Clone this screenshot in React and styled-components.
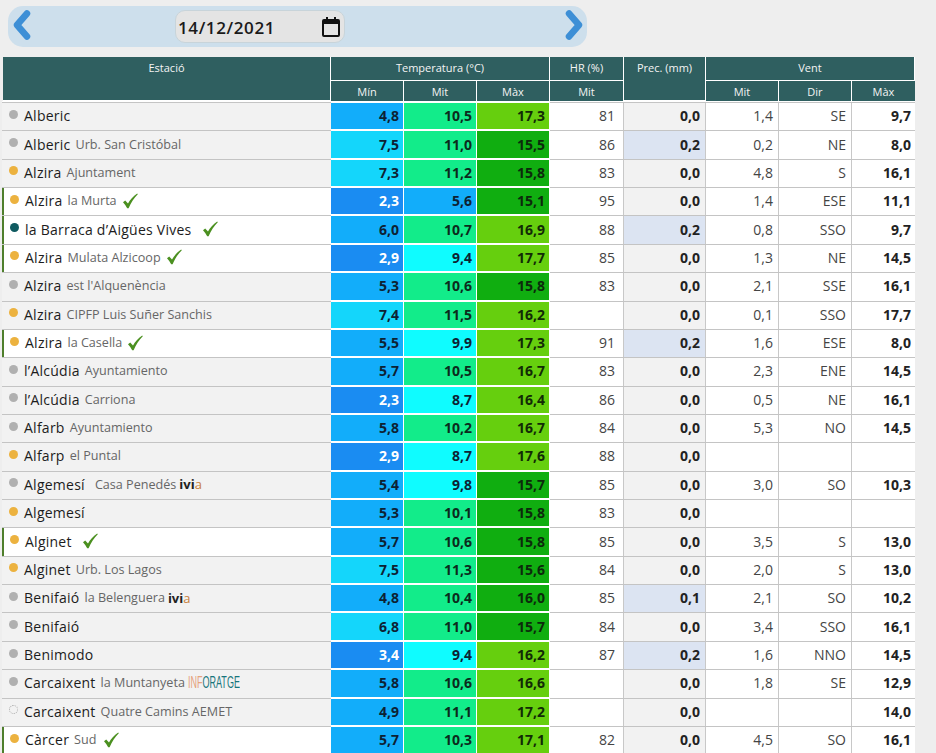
import React from 'react';
import styled, { createGlobalStyle } from 'styled-components';

const COLUMNS = '329px 73px 73px 73px 74px 82px 73px 73px 63px';
const HEADER_COLUMNS = '328px 73px 73px 73px 74px 82px 73px 73px 63px';

const GlobalStyle = createGlobalStyle`
  html, body {
    margin: 0;
    height: 100%;
    overflow: hidden;
    background: #eeeeee;
  }
  body {
    font-family: "Open Sans", "Liberation Sans", sans-serif;
    color: #222;
  }
`;

const Page = styled.div`
  padding: 6px 21px 0 2px;
`;

const DateBar = styled.div`
  display: flex;
  align-items: center;
  width: 579px;
  height: 41px;
  margin: 0 0 10px 6px;
  padding: 0 4px 0 5px;
  box-sizing: border-box;
  background: #cddfec;
  border-radius: 15px;
`;

const Arrow = styled.svg`
  display: block;
  width: 18px;
  height: 30px;
  margin-top: -3px;
  fill: none;
  stroke: #3d8fd6;
  stroke-width: 6.5;
  stroke-linecap: round;
  stroke-linejoin: round;
`;

const DateBox = styled.div`
  display: flex;
  align-items: center;
  justify-content: space-between;
  width: 170px;
  height: 33px;
  margin: 0 auto 0 144px;
  padding: 1px 4px 0 2px;
  box-sizing: border-box;
  background: #e4e4e4;
  border: 1px solid #c8d4da;
  border-radius: 10px;
  font-size: 17px;
  font-weight: 600;
  letter-spacing: .6px;
  color: #1a1a1a;
`;

const CalendarIcon = styled.svg`
  display: block;
  width: 18px;
  height: 20px;
  margin-top: -1px;
`;

const HeaderGrid = styled.div`
  display: grid;
  grid-template-columns: ${HEADER_COLUMNS};
  grid-template-rows: 24px 20px;
  margin-left: 1px;
  color: #f4f4f4;
  font-size: 11px;
  font-weight: 500;
`;

const HeaderCell = styled.div`
  display: flex;
  justify-content: center;
  align-items: ${p => (p.$top ? 'flex-start' : 'center')};
  padding-top: ${p => (p.$top ? '3px' : '0')};
  box-sizing: border-box;
  background: #2f5f60;
  border-right: 1px solid #fff;
  border-bottom: ${p => (p.$sub ? '0' : '1px solid #fff')};
  grid-column: ${p => p.$col || 'auto'};
  grid-row: ${p => p.$row || 'auto'};
  &:last-child {
    border-right: 0;
  }
`;

const HeaderGap = styled.div`
  height: 1px;
  background: #fff;
`;

const Row = styled.div`
  display: grid;
  grid-template-columns: ${COLUMNS};
  height: 28.36px;
  box-sizing: border-box;
  border-top: 1px solid #c4c4c4;
  background: #fff;
  font-size: 13.5px;
`;

const StationCell = styled.div`
  display: flex;
  align-items: center;
  min-width: 0;
  padding: 0 0 2px ${p => (p.$active ? '6px' : '7px')};
  box-sizing: border-box;
  white-space: nowrap;
  background: ${p => (p.$active ? '#fff' : '#f2f2f2')};
  border-left: ${p => (p.$active ? '2px solid #4f7f2c' : '0')};
`;

const Dot = styled.span`
  flex: none;
  width: 9px;
  height: 9px;
  margin: -3px 6px 0 0;
  box-sizing: border-box;
  border-radius: 50%;
  background: ${p => (p.$kind === 'none' ? 'transparent' : p.$color)};
  border: ${p => (p.$kind === 'none' ? '1px dotted #aaa' : '0')};
`;

const Name = styled.span`
  font-size: 14px;
  letter-spacing: .25px;
  color: #1c1c1c;
`;

const Place = styled.span`
  margin-left: ${p => p.$gap || 5}px;
  font-size: 12.6px;
  color: #666;
`;

const Ivia = styled.span`
  margin-left: 3px;
  font-size: 13px;
  font-weight: 700;
  color: #222;
  b {
    font-weight: 500;
    color: #c8803c;
  }
`;

const Inforatge = styled.span`
  display: inline-block;
  margin-left: 3px;
  width: 54px;
  font-family: "Liberation Sans", sans-serif;
  font-size: 17px;
  color: #17757c;
  transform-origin: left center;
  transform: scaleX(.53);
  i {
    font-style: normal;
    color: #e6a27e;
  }
`;

const Check = styled.svg`
  flex: none;
  width: 16px;
  height: 16px;
  margin-left: ${p => p.$gap || 5}px;
  fill: #4b9020;
`;

const TempCell = styled.div`
  display: flex;
  align-items: center;
  justify-content: flex-end;
  padding: 0 4px 1px 0;
  box-sizing: border-box;
  font-size: 14px;
  font-weight: 700;
  background: ${p => p.$bg};
  color: ${p => p.$fg};
  border-right: 1px solid #fff;
  border-bottom: 1px solid #fff;
  margin-top: -1px;
  border-top: 1px solid #fff;
`;

const ValueCell = styled.div`
  display: flex;
  align-items: center;
  justify-content: flex-end;
  padding: 0 ${p => p.$pad || 6}px 2px 0;
  box-sizing: border-box;
  font-size: 14px;
  color: #444;
  border-right: 1px solid #c8c8c8;
  &:last-child {
    border-right: 0;
  }
`;

const RainCell = styled(ValueCell)`
  font-weight: 700;
  color: #222;
  background: ${p => (p.$wet ? '#dce4f2' : '#f2f2f2')};
`;

const GustCell = styled(ValueCell)`
  font-weight: 700;
  color: #222;
`;

const DOTS = { grey: '#b0b0b0', orange: '#ecb23f', teal: '#0f5a60', none: 'none' };

// name, place, dot, check gap, min, mit, max, hr, prec, wind, dir, gust, brand, place gap
const STATIONS = [
  ['Alberic', '', 'grey', 0, '4,8', '10,5', '17,3', '81', '0,0', '1,4', 'SE', '9,7'],
  ['Alberic', 'Urb. San Cristóbal', 'grey', 0, '7,5', '11,0', '15,5', '86', '0,2', '0,2', 'NE', '8,0'],
  ['Alzira', 'Ajuntament', 'orange', 0, '7,3', '11,2', '15,8', '83', '0,0', '4,8', 'S', '16,1'],
  ['Alzira', 'la Murta', 'orange', 5, '2,3', '5,6', '15,1', '95', '0,0', '1,4', 'ESE', '11,1'],
  ['la Barraca d’Aigües Vives', '', 'teal', 11, '6,0', '10,7', '16,9', '88', '0,2', '0,8', 'SSO', '9,7'],
  ['Alzira', 'Mulata Alzicoop', 'orange', 5, '2,9', '9,4', '17,7', '85', '0,0', '1,3', 'NE', '14,5'],
  ['Alzira', 'est l\'Alquenència', 'grey', 0, '5,3', '10,6', '15,8', '83', '0,0', '2,1', 'SSE', '16,1'],
  ['Alzira', 'CIPFP Luis Suñer Sanchis', 'orange', 0, '7,4', '11,5', '16,2', '', '0,0', '0,1', 'SSO', '17,7'],
  ['Alzira', 'la Casella', 'orange', 5, '5,5', '9,9', '17,3', '91', '0,2', '1,6', 'ESE', '8,0'],
  ['l’Alcúdia', 'Ayuntamiento', 'grey', 0, '5,7', '10,5', '16,7', '83', '0,0', '2,3', 'ENE', '14,5'],
  ['l’Alcúdia', 'Carriona', 'grey', 0, '2,3', '8,7', '16,4', '86', '0,0', '0,5', 'NE', '16,1'],
  ['Alfarb', 'Ayuntamiento', 'grey', 0, '5,8', '10,2', '16,7', '84', '0,0', '5,3', 'NO', '14,5'],
  ['Alfarp', 'el Puntal', 'orange', 0, '2,9', '8,7', '17,6', '88', '0,0', '', '', ''],
  ['Algemesí', 'Casa Penedés', 'grey', 0, '5,4', '9,8', '15,7', '85', '0,0', '3,0', 'SO', '10,3', 'ivia', 10],
  ['Algemesí', '', 'orange', 0, '5,3', '10,1', '15,8', '83', '0,0', '', '', ''],
  ['Alginet', '', 'orange', 10, '5,7', '10,6', '15,8', '85', '0,0', '3,5', 'S', '13,0'],
  ['Alginet', 'Urb. Los Lagos', 'orange', 0, '7,5', '11,3', '15,6', '84', '0,0', '2,0', 'S', '13,0'],
  ['Benifaió', 'la Belenguera', 'grey', 0, '4,8', '10,4', '16,0', '85', '0,1', '2,1', 'SO', '10,2', 'ivia'],
  ['Benifaió', '', 'grey', 0, '6,8', '11,0', '15,7', '84', '0,0', '3,4', 'SSO', '16,1'],
  ['Benimodo', '', 'grey', 0, '3,4', '9,4', '16,2', '87', '0,2', '1,6', 'NNO', '14,5'],
  ['Carcaixent', 'la Muntanyeta', 'grey', 0, '5,8', '10,6', '16,6', '', '0,0', '1,8', 'SE', '12,9', 'inforatge'],
  ['Carcaixent', 'Quatre Camins AEMET', 'none', 0, '4,9', '11,1', '17,2', '', '0,0', '', '', '14,0'],
  ['Càrcer', 'Sud', 'orange', 7, '5,7', '10,3', '17,1', '82', '0,0', '4,5', 'SO', '16,1'],
];

function tempColors(text) {
  const t = parseFloat(text.replace(',', '.'));
  if (t < 4) return { bg: '#1a8cf2', fg: '#fff' };
  if (t < 6.5) return { bg: '#12adfa', fg: '#0d2233' };
  if (t < 8) return { bg: '#14d6fb', fg: '#0d2233' };
  if (t < 10) return { bg: '#0ffcff', fg: '#0d2233' };
  if (t < 13) return { bg: '#12ec8a', fg: '#0c2a1c' };
  if (t <= 16) return { bg: '#10ae10', fg: '#0c2a0c' };
  return { bg: '#66cf0e', fg: '#122a06' };
}

function CheckMark({ gap }) {
  return (
    <Check $gap={gap} viewBox="0 0 16 16">
      <path d="M1 9.2 L3.2 7.4 L6 10.4 C8 7 11 3.4 15.2 .6 L15.8 1.2 C12 5 9 9.6 6.6 15.2 L5.2 15.2 C4 12.8 2.6 10.8 1 9.2 Z" />
    </Check>
  );
}

function Temp({ value }) {
  const { bg, fg } = tempColors(value);
  return <TempCell $bg={bg} $fg={fg}>{value}</TempCell>;
}

function StationRow({ data }) {
  const [name, place, dot, check, min, mit, max, hr, prec, wind, dir, gust, brand, placeGap] = data;
  const active = check > 0;
  return (
    <Row>
      <StationCell $active={active}>
        <Dot $kind={dot} $color={DOTS[dot]} />
        <Name>{name}</Name>
        {place && <Place $gap={placeGap}>{place}</Place>}
        {brand === 'ivia' && <Ivia>ivi<b>a</b></Ivia>}
        {brand === 'inforatge' && <Inforatge><i>INF</i>ORATGE</Inforatge>}
        {active && <CheckMark gap={check} />}
      </StationCell>
      <Temp value={min} />
      <Temp value={mit} />
      <Temp value={max} />
      <ValueCell $pad={8}>{hr}</ValueCell>
      <RainCell $pad={5} $wet={prec !== '0,0'}>{prec}</RainCell>
      <ValueCell $pad={5}>{wind}</ValueCell>
      <ValueCell $pad={5}>{dir}</ValueCell>
      <GustCell $pad={4}>{gust}</GustCell>
    </Row>
  );
}

export default function App() {
  return (
    <Page>
      <GlobalStyle />
      <DateBar>
        <Arrow viewBox="0 0 18 30"><path d="M14 3.5 L4 15 L14 26.5" /></Arrow>
        <DateBox>
          14/12/2021
          <CalendarIcon viewBox="0 0 18 20">
            <path fill="#111" d="M4 0h2v2h6V0h2v2h2a2 2 0 0 1 2 2v14a2 2 0 0 1-2 2H2a2 2 0 0 1-2-2V4a2 2 0 0 1 2-2h2V0Zm-2 7v11h14V7H2Z" />
          </CalendarIcon>
        </DateBox>
        <Arrow viewBox="0 0 18 30"><path d="M4 3.5 L14 15 L4 26.5" /></Arrow>
      </DateBar>
      <HeaderGrid>
        <HeaderCell $top $col="1" $row="1 / span 2">Estació</HeaderCell>
        <HeaderCell $top $col="2 / span 3" $row="1">Temperatura (°C)</HeaderCell>
        <HeaderCell $top $col="5" $row="1">HR (%)</HeaderCell>
        <HeaderCell $top $col="6" $row="1 / span 2">Prec. (mm)</HeaderCell>
        <HeaderCell $top $col="7 / span 3" $row="1">Vent</HeaderCell>
        <HeaderCell $sub $col="2" $row="2">Mín</HeaderCell>
        <HeaderCell $sub $col="3" $row="2">Mit</HeaderCell>
        <HeaderCell $sub $col="4" $row="2">Màx</HeaderCell>
        <HeaderCell $sub $col="5" $row="2">Mit</HeaderCell>
        <HeaderCell $sub $col="7" $row="2">Mit</HeaderCell>
        <HeaderCell $sub $col="8" $row="2">Dir</HeaderCell>
        <HeaderCell $sub $col="9" $row="2">Màx</HeaderCell>
      </HeaderGrid>
      <HeaderGap />
      {STATIONS.map((s, i) => <StationRow key={i} data={s} />)}
    </Page>
  );
}
